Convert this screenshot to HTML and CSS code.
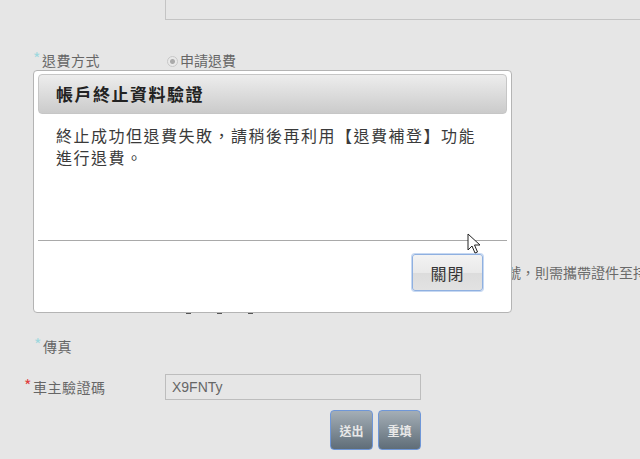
FILE: index.html
```html
<!DOCTYPE html>
<html>
	<head>
		<meta charset="utf-8">
		<link rel="stylesheet" href="styles.css">
	</head>
	<body>
		<div class="page">
			<div class="memo"></div>

			<div class="row row-refund">
				<div class="label"><span class="star">*</span>退費方式</div>
				<div class="field">
					<span class="radio"></span>申請退費
				</div>
			</div>

			<div class="row row-note">
				<div class="field note">如欲申請退費者，退費帳戶若非車主本人所有之存款帳號，則需攜帶證件至持卡銀行辦理</div>
			</div>

			<div class="row row-dash">
				<div class="field dash"><i></i><i></i><i></i></div>
			</div>

			<div class="row row-fax">
				<div class="label"><span class="star">*</span>傳真</div>
			</div>

			<div class="row row-code">
				<div class="label"><span class="star req">*</span>車主驗證碼</div>
				<div class="field">
					<input class="code" type="text" value="X9FNTy">
				</div>
			</div>

			<div class="actions">
				<button class="btn">送出</button>
				<button class="btn">重填</button>
			</div>
		</div>

		<!-- 對話框 -->
		<div class="dialog">
			<div class="dialog-title">帳戶終止資料驗證</div>
			<div class="dialog-body">
				終止成功但退費失敗，請稍後再利用【退費補登】功能<br>進行退費。
			</div>
			<div class="dialog-foot">
				<button class="close">關閉</button>
			</div>
		</div>

		<svg class="cursor" width="14" height="22" viewBox="0 0 14 22">
			<path d="M1 1 L1 17 L5 13 L8 20 L10.5 19 L7.5 12 L13 12 Z" fill="#fff" stroke="#222" stroke-width="1" stroke-linejoin="round"/>
		</svg>
	</body>
</html>
```

FILE: styles.css
```css
html, body {
	margin: 0;
	padding: 0;
}

body {
	background-color: #e6e6e6;
	font-family: "Noto Sans CJK TC", "Noto Sans", sans-serif;
	color: #666;
	width: 640px;
	height: 459px;
	overflow: hidden;
	position: relative;
}

.page {
	position: relative;
}

.memo {
	margin-left: 165px;
	height: 20px;
	box-sizing: border-box;
	border: 1px solid #c4c4c4;
	border-top: none;
	border-right: none;
}

.row {
	display: flex;
	align-items: center;
	height: 30px;
	font-size: 14px;
}

.label {
	width: 165px;
	box-sizing: border-box;
	white-space: nowrap;
	letter-spacing: 0.5px;
	line-height: 20px;
}

.star {
	display: inline-block;
	color: #9ed8de;
	font-size: 16px;
	line-height: 14px;
	height: 14px;
	margin-right: 1px;
	vertical-align: top;
	padding-top: 1px;
}

.star.req {
	color: #e04040;
}

.row-refund {
	margin-top: 25px;
}
.row-refund .label {
	padding-left: 33px;
}

.radio {
	display: inline-block;
	width: 9px;
	height: 9px;
	border-radius: 50%;
	border: 1px solid #c8c8c8;
	background: radial-gradient(circle, #aaa 0, #aaa 2px, #e9e9e9 3px);
	margin-right: 2px;
	vertical-align: -1px;
}

.field {
	white-space: nowrap;
	line-height: 20px;
}

.row-refund .field {
	margin-left: 2px;
}

.row-note {
	margin-top: 182px;
}
.note {
	margin-left: 171px;
	width: 469px;
	overflow: hidden;
	color: #6a6a6a;
}

.row-dash {
	height: 28px;
	align-items: flex-end;
}
.dash {
	margin-left: 186px;
	display: flex;
	gap: 26px;
}
.dash i {
	display: block;
	width: 5px;
	height: 2px;
	background: #555;
	margin-bottom: 1px;
}

.row-fax {
	margin-top: 16px;
}
.row-fax .label {
	padding-left: 34px;
}

.row-code {
	margin-top: 11px;
}
.row-code .label {
	padding-left: 24px;
}

.code {
	width: 256px;
	height: 26px;
	box-sizing: border-box;
	border: 1px solid #bdbdbd;
	background: #e6e6e6;
	font-family: "Liberation Sans", sans-serif;
	font-size: 14px;
	color: #666;
	padding: 0 6px;
	margin: 0;
	outline: none;
}

.actions {
	margin: 8px 0 0 330px;
	display: flex;
	gap: 5px;
}

.btn {
	width: 43px;
	height: 40px;
	border: 1px solid #6f97d8;
	border-radius: 4px;
	background: linear-gradient(#a4aeb6, #5f6d78);
	color: #e8e8e8;
	font-family: "Noto Sans CJK TC", sans-serif;
	font-size: 12px;
	font-weight: bold;
	padding: 0;
}

/* 對話框 */
.dialog {
	position: absolute;
	left: 33px;
	top: 70px;
	width: 479px;
	height: 243px;
	box-sizing: border-box;
	background: #fff;
	border: 1px solid #b4b4b4;
	border-radius: 4px;
	padding: 3px 4px;
	display: flex;
	flex-direction: column;
}

.dialog-title {
	height: 40px;
	box-sizing: border-box;
	border: 1px solid #c6c6c6;
	border-radius: 4px;
	background: linear-gradient(#ededed, #cbcbcb);
	padding-left: 17px;
	line-height: 38px;
	font-size: 17px;
	font-weight: bold;
	letter-spacing: 1.5px;
	color: #222;
}

.dialog-body {
	height: 127px;
	box-sizing: border-box;
	padding: 10px 0 0 18px;
	font-size: 16px;
	line-height: 22px;
	letter-spacing: 1.5px;
	color: #3a3a3a;
	border-bottom: 1px solid #a9a9a9;
}

.dialog-foot {
	display: flex;
	justify-content: flex-end;
	padding: 13px 24px 0 0;
}

.close {
	width: 71px;
	height: 37px;
	border: 1px solid #8fb0e0;
	border-radius: 3px;
	box-shadow: 0 0 0 1px #c6d8f2;
	background: linear-gradient(#f3f3f3 0, #e9e9e9 50%, #dcdcdc 51%, #e2e2e2 100%);
	font-family: "Noto Sans CJK TC", sans-serif;
	font-size: 16px;
	letter-spacing: 1px;
	color: #333;
	padding: 0;
}

.cursor {
	position: absolute;
	left: 467px;
	top: 233px;
}
```
